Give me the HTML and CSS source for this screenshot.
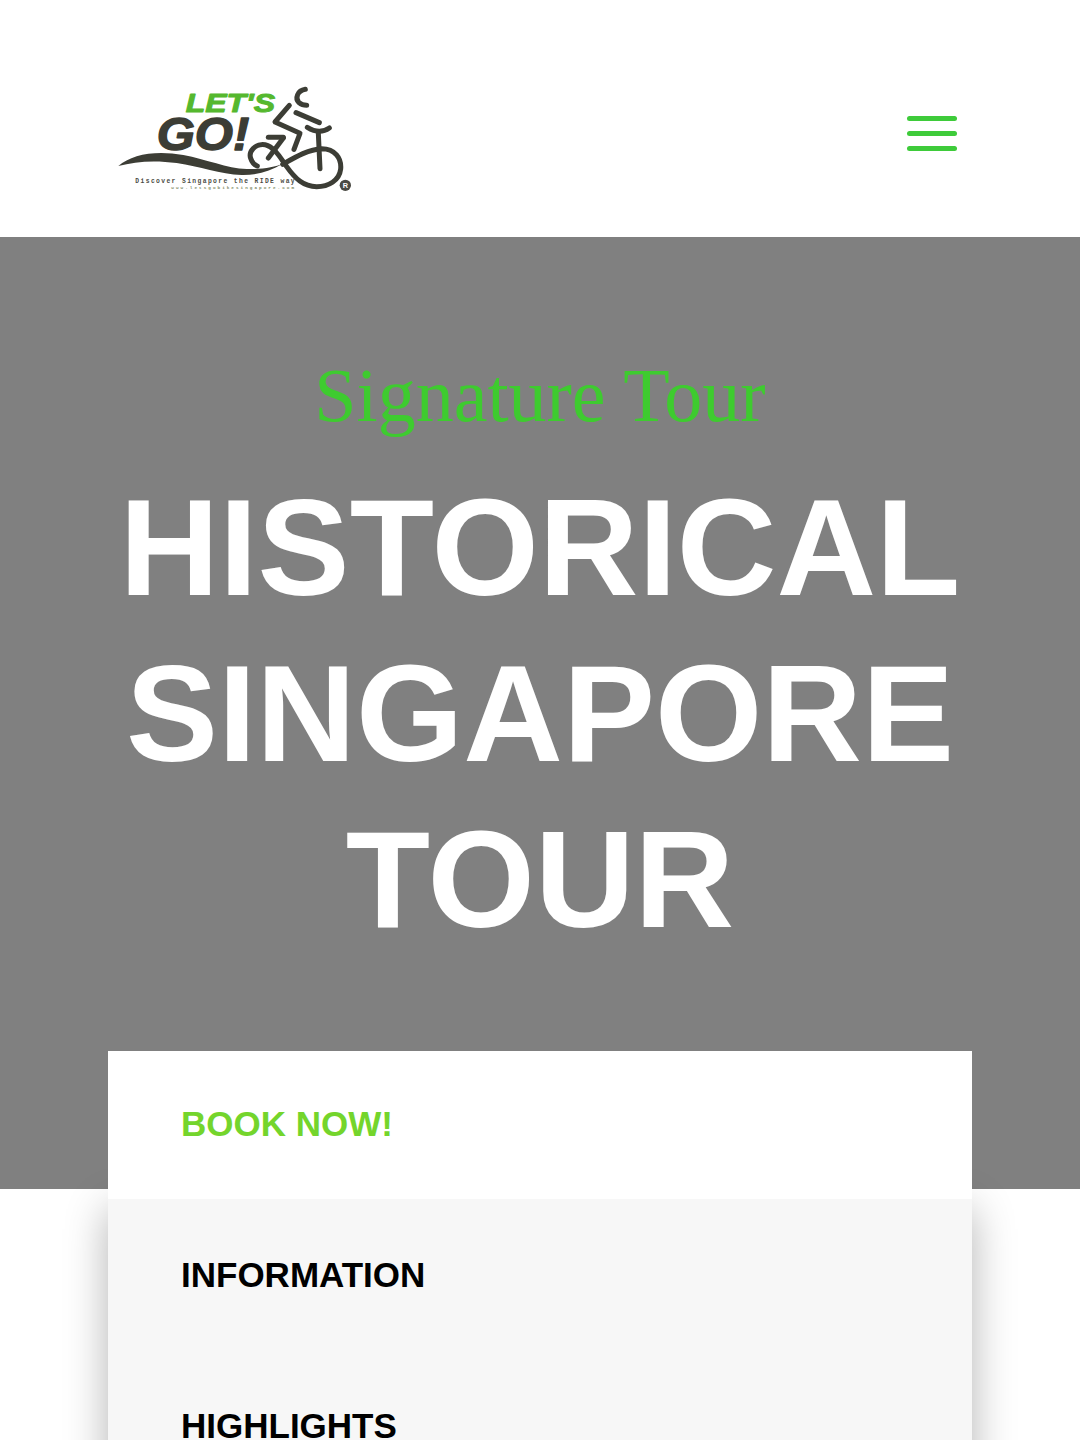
FILE: index.html
```html
<!DOCTYPE html>
<html lang="en">
<head>
  <meta charset="UTF-8" />
  <title>Historical Singapore Tour</title>
  <link rel="stylesheet" href="styles.css">
</head>
<body>
  <div class="page">
    <header class="site-header">
      <svg class="logo" viewBox="0 0 810 405" width="270" height="135" fill="none" stroke-linecap="round" stroke-linejoin="round">
        <text class="logo-lets" x="257" y="127" textLength="268" lengthAdjust="spacingAndGlyphs">LET'S</text>
        <text class="logo-go" x="170" y="241" textLength="278" lengthAdjust="spacingAndGlyphs">GO!</text>
        <path class="logo-fill" d="M55 288C95 252 170 240 250 255C320 268 380 295 440 297C485 298 525 291 548 281C510 304 470 316 425 315C360 313 300 289 230 279C165 270 105 274 55 288Z"/>
        <g class="logo-line">
          <path d="M548 283C585 262 625 238 665 236C705 236 725 265 722 297C718 332 685 350 650 350C610 350 585 325 560 290C540 262 525 232 495 224C465 220 445 245 452 265C456 278 464 285 472 288"/>
          <path d="M616 58C592 62 584 85 597 98C604 104 612 106 620 106"/>
          <path d="M568 106L525 156L600 190L582 238"/>
          <path d="M588 128L658 158"/>
          <path d="M622 172C645 186 668 188 688 174"/>
          <path d="M655 190L660 296"/>
          <path d="M550 204L505 264"/>
          <path d="M505 202H550"/>
        </g>
        <circle class="logo-mark" cx="736" cy="346" r="17"/>
        <text class="logo-mark-r" x="736" y="354" text-anchor="middle">R</text>
        <text class="logo-tag" x="106" y="339" textLength="478" lengthAdjust="spacing">Discover Singapore the RIDE way</text>
        <text class="logo-url" x="214" y="358" textLength="368" lengthAdjust="spacing">www.letsgobikesingapore.com</text>
      </svg>
      <div class="menu-icon">
        <span></span>
        <span></span>
        <span></span>
      </div>
    </header>

    <section class="hero">
      <p class="hero-sub">Signature Tour</p>
      <h1 class="hero-title">HISTORICAL SINGAPORE TOUR</h1>
    </section>

    <nav class="tour-menu">
      <a class="tour-link active">BOOK NOW!</a>
      <div class="tour-list">
        <a class="tour-link">INFORMATION</a>
        <a class="tour-link">HIGHLIGHTS</a>
      </div>
    </nav>
  </div>
</body>
</html>
```

FILE: styles.css
```css
* {
  box-sizing: border-box;
}

body {
  margin: 0;
  font-family: "Liberation Sans", Arial, sans-serif;
  background-color: #fff;
}

.page {
  height: 1440px;
  overflow: hidden;
}

.site-header {
  height: 237px;
  padding: 70px 123px 0 100px;
  display: flex;
  justify-content: space-between;
  align-items: flex-start;
  background-color: #fff;
}

.logo-lets {
  font: italic bold 80px "Liberation Sans", sans-serif;
  fill: #55b82e;
  stroke: #55b82e;
  stroke-width: 3;
}

.logo-go {
  font: italic bold 136px "Liberation Sans", sans-serif;
  fill: #3c3d35;
  stroke: #3c3d35;
  stroke-width: 4;
}

.logo-fill {
  fill: #3c3d35;
}

.logo-line {
  stroke: #3c3d35;
  stroke-width: 15;
}

.logo-mark {
  fill: #4a4a44;
}

.logo-mark-r {
  font: bold 22px "Liberation Sans", sans-serif;
  fill: #fff;
}

.logo-tag {
  font: bold 19px "Liberation Mono", monospace;
  fill: #4b4c45;
}

.logo-url {
  font: bold 13px "Liberation Mono", monospace;
  fill: #7f8c66;
}

.menu-icon {
  width: 50px;
  margin-top: 46px;
  display: flex;
  flex-direction: column;
  gap: 10px;
}

.menu-icon span {
  height: 5px;
  border-radius: 3px;
  background-color: #3ecb3a;
}

.hero {
  height: 952px;
  padding-top: 116px;
  background-color: #808080;
  text-align: center;
}

.hero-sub {
  margin: 0;
  font-family: "Liberation Serif", "Times New Roman", serif;
  font-size: 76px;
  line-height: 84px;
  color: #3ecb2f;
}

.hero-title {
  margin: 27px auto 0;
  width: 900px;
  font-size: 138px;
  line-height: 166px;
  font-weight: bold;
  color: #fff;
}

.tour-menu {
  margin: -138px 108px 0;
  position: relative;
}

.tour-list {
  box-shadow: 0 10px 40px rgba(0, 0, 0, 0.3);
}

.tour-link {
  display: block;
  height: 151px;
  padding: 55px 73px 0;
  font-size: 35px;
  line-height: 42px;
  font-weight: bold;
  color: #000;
  background-color: #f7f7f7;
}

.tour-link.active {
  position: relative;
  z-index: 1;
  height: 148px;
  padding-top: 52px;
  color: #74d52c;
  background-color: #fff;
}
```
